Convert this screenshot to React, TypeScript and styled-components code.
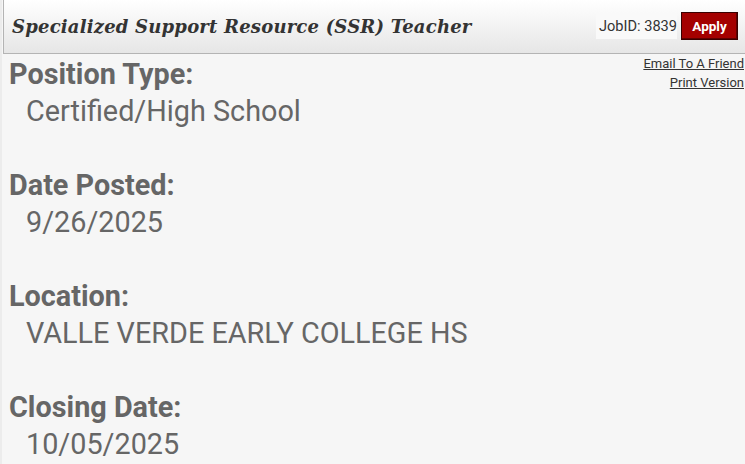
import React from "react";
import styled, { createGlobalStyle } from "styled-components";

const Global = createGlobalStyle`
  html, body { margin: 0; padding: 0; background: #f6f6f6; }
  body { font-family: Roboto, "Liberation Sans", sans-serif; color: #666; overflow: hidden; }
`;

const Page = styled.div`
  width: 745px;
  height: 464px;
  overflow: hidden;
  border-left: 2px solid #ececec;
  box-sizing: border-box;
`;

const Header = styled.div`
  display: flex;
  align-items: center;
  justify-content: space-between;
  height: 54px;
  margin-left: 1px;
  border-left: 1px solid #b4b4b4;
  border-bottom: 1px solid #b4b4b4;
  background: linear-gradient(#ffffff, #e6e6e6);
  padding-left: 8px;
  padding-right: 7px;
  box-sizing: border-box;
`;

const Title = styled.h1`
  margin: 0;
  font-family: "DejaVu Serif", "Liberation Serif", serif;
  font-style: italic;
  font-weight: bold;
  font-size: 18px;
  color: #333;
  letter-spacing: 0.2px;
`;

const Actions = styled.div`
  display: flex;
  align-items: center;
  gap: 4px;
  margin-top: -2px;
`;

const JobId = styled.span`
  font-size: 14.6px;
  color: #333;
  background: #f9f9f9;
  padding: 4px 0 4px 3px;
`;

const ApplyButton = styled.button`
  background: #a40000;
  color: #fff;
  font-family: Roboto, "Liberation Sans", sans-serif;
  font-weight: bold;
  font-size: 13.5px;
  border: 1px solid #3a0000;
  box-shadow: inset -1px -1px 0 #600000;
  width: 57px;
  height: 28px;
  padding: 0;
`;

const Content = styled.div`
  padding-left: 7px;
  padding-right: 1px;
  padding-top: 2px;
`;

const Links = styled.div`
  float: right;
  display: flex;
  flex-direction: column;
  align-items: flex-end;
  gap: 4px;
`;

const SmallLink = styled.a`
  font-size: 13px;
  line-height: 15px;
  color: #333;
  text-decoration: underline;
`;

const Section = styled.div`
  margin-bottom: 37px;
`;

const Label = styled.div`
  font-weight: bold;
  font-size: 28.8px;
  line-height: 37px;
  color: #666;
`;

const Value = styled.div`
  font-size: 28.8px;
  line-height: 37px;
  padding-left: 17px;
  color: #666;
`;

const fields = [
  { label: "Position Type:", value: "Certified/High School" },
  { label: "Date Posted:", value: "9/26/2025" },
  { label: "Location:", value: "VALLE VERDE EARLY COLLEGE HS" },
  { label: "Closing Date:", value: "10/05/2025" },
];

export default function App() {
  return (
    <>
      <Global />
      <Page>
        <Header>
          <Title>Specialized Support Resource (SSR) Teacher</Title>
          <Actions>
            <JobId>JobID: 3839</JobId>
            <ApplyButton>Apply</ApplyButton>
          </Actions>
        </Header>
        <Content>
          <Links>
            <SmallLink href="#">Email To A Friend</SmallLink>
            <SmallLink href="#">Print Version</SmallLink>
          </Links>
          {fields.map((f) => (
            <Section key={f.label}>
              <Label>{f.label}</Label>
              <Value>{f.value}</Value>
            </Section>
          ))}
        </Content>
      </Page>
    </>
  );
}
